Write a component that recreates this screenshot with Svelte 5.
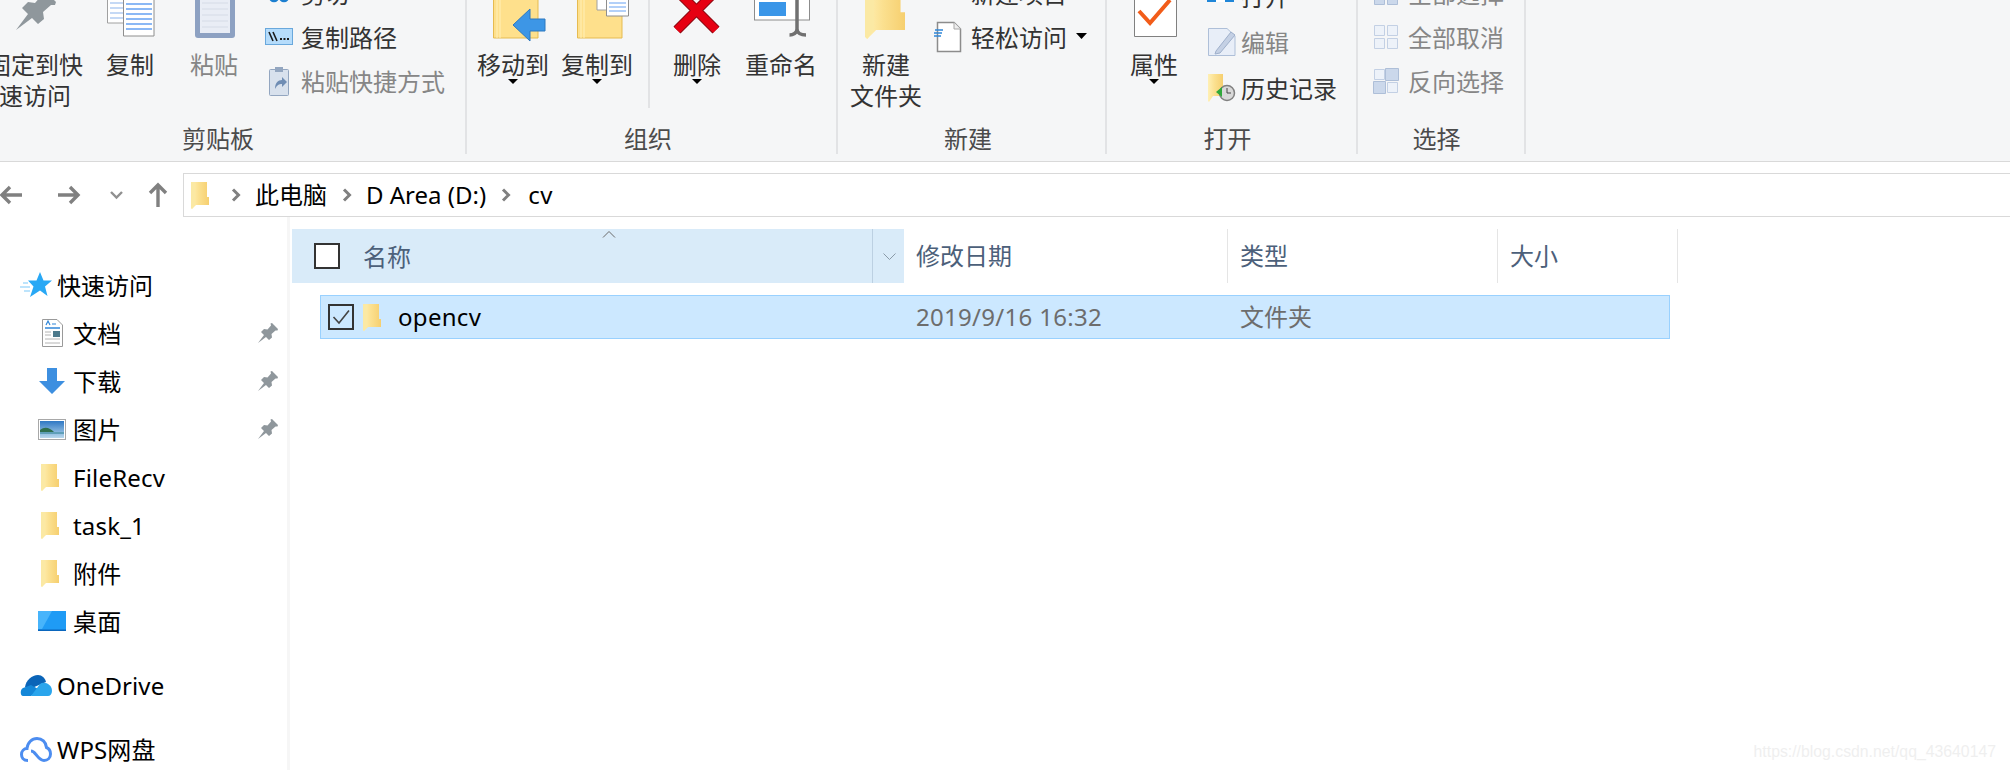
<script>
	const quick = [
		{ name: '文档', icon: 'doc', pin: true },
		{ name: '下载', icon: 'down', pin: true },
		{ name: '图片', icon: 'pic', pin: true },
		{ name: 'FileRecv', icon: 'folder' },
		{ name: 'task_1', icon: 'folder' },
		{ name: '附件', icon: 'folder' },
		{ name: '桌面', icon: 'desk' }
	];
</script>

{#snippet folder(w = 18, h = 27)}
	<svg class="fld" width={w} height={h} viewBox="0 0 18 27">
		<path d="M0 0H16V15H18V23H5L1 27L0 26Z" fill="url(#folderFill)" />
		<path d="M0 0H4V23L1 27L0 26Z" fill="#fbe9a4" />
	</svg>
{/snippet}

{#snippet pin(size = 20)}
	<svg width={size} height={size} viewBox="0 0 20 20">
		<path
			d="M0 20L6 12L3 9L6 6L9.5 6.5L13 2.5L12.5.5L14 0L20 6L19.5 7.5L17.5 7.5L13.5 11L14 14.5L11 17L8 14Z"
			fill="#8f979c"
		/>
	</svg>
{/snippet}

{#snippet chevron()}
	<svg class="chev" width="10" height="14" viewBox="0 0 10 14">
		<path d="M2 1.5L7.5 7L2 12.5" fill="none" stroke="#808080" stroke-width="3" />
	</svg>
{/snippet}

{#snippet caret()}
	<svg class="caret" width="10" height="5" viewBox="0 0 10 5"><path d="M0 0H10L5 5Z" fill="#000" /></svg>
{/snippet}

<svg class="defs" width="0" height="0" aria-hidden="true">
	<defs>
		<linearGradient id="folderFill" x1="0" x2="1" y1="0" y2="0">
			<stop offset="0" stop-color="#fff0b5" />
			<stop offset="0.45" stop-color="#fbe08f" />
			<stop offset="1" stop-color="#f6cf6f" />
		</linearGradient>
		<linearGradient id="skyFill" x1="0" x2="0" y1="0" y2="1">
			<stop offset="0" stop-color="#2f78c4" />
			<stop offset="1" stop-color="#b8d8ec" />
		</linearGradient>
	</defs>
</svg>

<div class="window">
	<section class="ribbon">
		<div class="group clipboard">
			<div class="tools">
				<div class="big w-pin">
					<div class="ico">
						<svg width="96" height="40" viewBox="0 0 96 40">
							<svg x="29" y="-10" width="40" height="40" viewBox="0 0 20 20">
								<path
									d="M0 20L6 12L3 9L6 6L9.5 6.5L13 2.5L12.5.5L14 0L20 6L19.5 7.5L17.5 7.5L13.5 11L14 14.5L11 17L8 14Z"
									fill="#8f979c"
								/>
							</svg>
						</svg>
					</div>
					<span>固定到快<br />速访问</span>
				</div>
				<div class="big w-copy">
					<div class="ico">
						<svg width="47" height="40" viewBox="0 0 47 40">
							<path d="M1.5-5H30V23H1.5Z" fill="#fff" stroke="#a0a0a0" />
							<path d="M4 3H28M4 8H28M4 13H28M4 18H28" stroke="#b3cdf2" stroke-width="1.5" />
							<path d="M17.5-5H48V36H17.5Z" fill="#fff" stroke="#8e8e8e" />
							<path d="M20 4H46M20 9H46M20 14H46M20 19H46M20 24H46M20 29H46" stroke="#66a1f2" stroke-width="1.5" />
						</svg>
					</div>
					<span>复制</span>
				</div>
				<div class="big w-paste muted">
					<div class="ico">
						<svg width="47" height="40" viewBox="0 0 47 40">
							<rect x="5" y="-10" width="40" height="48" rx="3" fill="#8da1c2" />
							<rect x="10" y="-8" width="30" height="41" fill="#e9edf5" />
							<path d="M12 3H38M12 9H38M12 15H38M12 21H38M12 27H38" stroke="#d5dbe6" />
						</svg>
					</div>
					<span>粘贴</span>
				</div>
				<div class="small-col cb-col">
					<div class="small">
						<svg class="s-ico" width="28" height="20" viewBox="0 0 28 20">
							<circle cx="9" cy="14" r="4" fill="none" stroke="#1c7fd0" stroke-width="2.5" />
							<circle cx="19" cy="14" r="4" fill="none" stroke="#1c7fd0" stroke-width="2.5" />
							<path d="M11 10L18 0M17 10L10 0" stroke="#4d6a85" stroke-width="2" />
						</svg>
						<span>剪切</span>
					</div>
					<div class="small">
						<svg class="s-ico" width="28" height="18" viewBox="0 0 28 18">
							<rect x=".5" y=".5" width="27" height="16" fill="#b5dcfb" stroke="#69a8dc" />
							<path d="M4 4L8 13M8 4L12 13" stroke="#1a1a1a" stroke-width="1.6" />
							<path d="M15 11H24" stroke="#1a1a1a" stroke-width="2" stroke-dasharray="2 1.5" />
						</svg>
						<span>复制路径</span>
					</div>
					<div class="small muted">
						<svg class="s-ico" width="28" height="29" viewBox="0 0 28 29">
							<rect x="4.5" y="2.5" width="19" height="26" rx="1" fill="#d8e1ed" stroke="#93a6c0" />
							<rect x="10" y="0" width="8" height="5" fill="#93a6c0" />
							<path d="M10 22C10 16 13 13 17 13V10L22 15L17 20V17C14 17 12 18 10 22Z" fill="#6f8db4" />
						</svg>
						<span>粘贴快捷方式</span>
					</div>
				</div>
			</div>
			<p class="label">剪贴板</p>
		</div>

		<div class="group organize">
			<div class="tools">
				<div class="big w-3">
					<div class="ico">
						<svg width="72" height="40" viewBox="0 0 72 40">
							<path d="M16.5-5H61V38H16.5Z" fill="#fee08c" stroke="#e6bb50" />
							<path d="M20 -5V38M23 -5V38" stroke="#fff0b8" />
							<path d="M36 25L53 9V19H68V31H53V41Z" fill="#3d96e6" stroke="#2c78c0" />
						</svg>
					</div>
					<span>移动到</span>
					{@render caret()}
				</div>
				<div class="big w-3">
					<div class="ico">
						<svg width="72" height="40" viewBox="0 0 72 40">
							<path d="M16.5-5H61V38H16.5Z" fill="#fee08c" stroke="#e6bb50" />
							<path d="M20 -5V38M23 -5V38" stroke="#fff0b8" />
							<path d="M36-5H62V10H36Z" fill="#fff" stroke="#a0a0a0" />
							<path d="M45.5-5H67.5V16H45.5Z" fill="#fff" stroke="#8e8e8e" />
							<path d="M48 3H65M48 7H65M48 11H65" stroke="#66a1f2" />
						</svg>
					</div>
					<span>复制到</span>
					{@render caret()}
				</div>
				<div class="rule"></div>
				<div class="big w-del">
					<div class="ico">
						<svg width="48" height="40" viewBox="0 0 48 40">
							<path d="M4-9L43 30M43-9L4 30" stroke="#8d0a12" stroke-width="10" />
							<path d="M4-9L43 30M43-9L4 30" stroke="#e60012" stroke-width="8" />
						</svg>
					</div>
					<span>删除</span>
					{@render caret()}
				</div>
				<div class="big w-3 ren">
					<div class="ico">
						<svg width="72" height="40" viewBox="0 0 72 40">
							<rect x="9.5" y="-5" width="55" height="25" fill="#fff" stroke="#8c8c8c" />
							<rect x="14" y="2" width="27" height="14" fill="#3a96e8" />
							<path d="M52-5V30M44.5 35C48 35 52 33 52 29C52 33 56 35 61 35" fill="none" stroke="#707070" stroke-width="3.5" />
						</svg>
					</div>
					<span>重命名</span>
				</div>
			</div>
			<p class="label">组织</p>
		</div>

		<div class="group create">
			<div class="tools">
				<div class="big w-3 newf">
					<div class="ico">
						<svg width="72" height="40" viewBox="0 0 72 40">
							<svg x="15" y="-22" width="40" height="62" viewBox="0 0 18 27">
								<path d="M0 1H16V15H18V23H5L1 27L0 26Z" fill="url(#folderFill)" />
								<path d="M0 1H4V23L1 27L0 26Z" fill="#fbe9a4" />
							</svg>
						</svg>
					</div>
					<span>新建<br />文件夹</span>
				</div>
				<div class="small-col new-col">
					<div class="small">
						<svg class="s-ico" width="37" height="20" viewBox="0 0 37 20">
							<path d="M10.5-8H29.5V5H10.5Z" fill="#fff" stroke="#9a9a9a" />
							<path d="M13 1H27M13 4H27" stroke="#66a1f2" />
						</svg>
						<span>新建项目</span>
					</div>
					<div class="small">
						<svg class="s-ico" width="37" height="30" viewBox="0 0 37 30">
							<path d="M3.5.5H20L26.5 7V29.5H3.5Z" fill="#fff" stroke="#8c8c8c" stroke-width="1.5" />
							<path d="M20 .5V7H26.5" fill="#eee" stroke="#a8a8a8" />
							<path d="M1 8H9M0 11H8M0 14H7" stroke="#2f86d8" stroke-width="1.5" />
						</svg>
						<span>轻松访问</span>
						<svg class="tri" width="11" height="6" viewBox="0 0 11 6"><path d="M0 0H11L5.5 6Z" fill="#000" /></svg>
					</div>
				</div>
			</div>
			<p class="label">新建</p>
		</div>

		<div class="group open">
			<div class="tools">
				<div class="big w-prop">
					<div class="ico">
						<svg width="48" height="40" viewBox="0 0 48 40">
							<path d="M4.5-5H46.5V36.5H4.5Z" fill="#fff" stroke="#808080" />
							<path d="M9 11L20 23L40 0" fill="none" stroke="#f25c19" stroke-width="4" />
						</svg>
					</div>
					<span>属性</span>
					{@render caret()}
				</div>
				<div class="small-col open-col">
					<div class="small">
						<svg class="s-ico" width="36" height="16" viewBox="0 0 36 16">
							<rect x="2" y="-4" width="27" height="10" fill="#f2b632" />
							<rect x="2" y="3" width="27" height="11" fill="#1f86d8" />
							<rect x="11" y="8" width="9" height="6" fill="#fff" />
						</svg>
						<span>打开</span>
					</div>
					<div class="small muted">
						<svg class="s-ico" width="36" height="28" viewBox="0 0 36 28">
							<path d="M3.5.5H22L30 8V27.5H3.5Z" fill="#e8eef8" stroke="#aebfd8" />
							<path d="M11 23L26 4L30 7L15 25L10 26Z" fill="#c4d0e4" stroke="#9fb0cb" />
						</svg>
						<span>编辑</span>
					</div>
					<div class="small">
						<svg class="s-ico" width="36" height="28" viewBox="0 0 36 28">
							<path d="M3 0H18V22H8L4 28L3 27Z" fill="url(#folderFill)" />
							<circle cx="22" cy="19" r="7.5" fill="#d8d8d8" stroke="#808080" stroke-width="1.5" />
							<path d="M22 14V19H26" fill="none" stroke="#444" />
							<path d="M11 18L17 13V23Z" fill="#2fa83a" />
						</svg>
						<span>历史记录</span>
					</div>
				</div>
			</div>
			<p class="label">打开</p>
		</div>

		<div class="group select">
			<div class="tools">
				<div class="small-col sel-col">
					<div class="small muted">
						<svg class="s-ico" width="35" height="26" viewBox="0 0 35 26">
							<path d="M1.5 1.5H11.5V11.5H1.5ZM14.5 1.5H24.5V11.5H14.5ZM1.5 14.5H11.5V24.5H1.5ZM14.5 14.5H24.5V24.5H14.5Z" fill="#cbd8eb" stroke="#aebfd8" />
						</svg>
						<span>全部选择</span>
					</div>
					<div class="small muted">
						<svg class="s-ico" width="35" height="26" viewBox="0 0 35 26">
							<path d="M1.5 1.5H11.5V11.5H1.5ZM14.5 1.5H24.5V11.5H14.5ZM1.5 14.5H11.5V24.5H1.5ZM14.5 14.5H24.5V24.5H14.5Z" fill="#edf2f9" stroke="#c3d0e4" />
						</svg>
						<span>全部取消</span>
					</div>
					<div class="small muted">
						<svg class="s-ico" width="35" height="26" viewBox="0 0 35 26">
							<path d="M1.5 1.5H11.5V11.5H1.5ZM14.5 14.5H24.5V24.5H14.5Z" fill="#edf2f9" stroke="#c3d0e4" />
							<path d="M12.5.5H25.5V12.5H12.5ZM.5 13.5H12.5V25.5H.5Z" fill="#cbd8eb" stroke="#aebfd8" />
						</svg>
						<span>反向选择</span>
					</div>
				</div>
			</div>
			<p class="label">选择</p>
		</div>
	</section>

	<nav class="navbar">
		<div class="nav-btns">
			<svg class="back" width="22" height="20" viewBox="0 0 22 20">
				<path d="M10 2L2 10L10 18M2 10H22" fill="none" stroke="#808080" stroke-width="3.4" />
			</svg>
			<svg class="fwd" width="22" height="20" viewBox="0 0 22 20">
				<path d="M12 2L20 10L12 18M20 10H0" fill="none" stroke="#808080" stroke-width="3.4" />
			</svg>
			<svg class="recent" width="13" height="8" viewBox="0 0 13 8">
				<path d="M1 1L6.5 6.5L12 1" fill="none" stroke="#909090" stroke-width="2.4" />
			</svg>
			<svg class="up" width="18" height="23" viewBox="0 0 18 23">
				<path d="M1 9L9 1L17 9M9 1V23" fill="none" stroke="#808080" stroke-width="3.4" />
			</svg>
		</div>
		<div class="address">
			<span class="addr-folder">{@render folder()}</span>
			{@render chevron()}
			<span class="crumb">此电脑</span>
			{@render chevron()}
			<span class="crumb">D Area (D:)</span>
			{@render chevron()}
			<span class="crumb last">cv</span>
		</div>
	</nav>

	<main class="body">
		<aside class="sidebar">
			<div class="row top">
				<svg class="top-ico" width="32" height="26" viewBox="0 0 32 26">
					<path d="M20 0L23.5 8.5H32L25 14.5L27.5 24L20 18.5L10 25L13.5 14.5L8 8.5H16.5Z" fill="#28a8f5" />
					<path d="M0 15H10M3 11H8M4 19H10" stroke="#a8dcfb" stroke-width="1.5" />
				</svg>
				<span>快速访问</span>
			</div>
			{#each quick as item}
				<div class="row sub">
					<span class="sub-ico">
						{#if item.icon === 'folder'}
							{@render folder()}
						{:else if item.icon === 'doc'}
							<svg width="21" height="28" viewBox="0 0 21 28">
								<path d="M.5.5H15L20.5 6V27.5H.5Z" fill="#fff" stroke="#9a9a9a" />
								<path d="M3 9H18" stroke="#2f86d8" stroke-width="1.5" />
								<path d="M4 6L6 2L8 6M10 5H14" fill="none" stroke="#2f86d8" stroke-width="1.2" />
								<rect x="11" y="12" width="7" height="6" fill="#4d7a8c" />
								<path d="M3 13H9M3 16H9M3 20H18M3 24H18" stroke="#b4b4b4" />
							</svg>
						{:else if item.icon === 'down'}
							<svg width="26" height="26" viewBox="0 0 26 26">
								<path d="M8 0H18V13H26L13 26L0 13H8Z" fill="#3d8fe0" />
							</svg>
						{:else if item.icon === 'pic'}
							<svg width="28" height="21" viewBox="0 0 28 21">
								<rect x=".5" y=".5" width="27" height="20" fill="#fff" stroke="#a8a8a8" />
								<rect x="2" y="2" width="24" height="17" fill="url(#skyFill)" />
								<path d="M2 11C7 7 12 9 16 13H2Z" fill="#2f6f4f" />
								<path d="M2 13H26V15H2Z" fill="#5f9fb8" />
							</svg>
						{:else}
							<svg width="28" height="20" viewBox="0 0 28 20">
								<rect width="28" height="20" fill="#1f9bf5" />
								<path d="M0 0H14L4 18H0Z" fill="#47b4fb" />
								<rect y="18.5" width="28" height="1.5" fill="#0a66bd" />
							</svg>
						{/if}
					</span>
					<span class="sub-name">{item.name}</span>
					{#if item.pin}
						<span class="pin">{@render pin()}</span>
					{/if}
				</div>
			{/each}
			<div class="row top spaced">
				<svg class="top-ico" width="32" height="21" viewBox="0 0 32 21">
					<path d="M5 12C6 5 12 0 18 0C22 0 25 3 26 7L12 13Z" fill="#0a64b8" />
					<path d="M3 21C0 21 0 14 3 13L11 10L20 15L11 21Z" fill="#1487d8" />
					<path d="M11 21L20 9C24 6 32 9 32 16C32 19 30 21 28 21Z" fill="#2aa5ec" />
				</svg>
				<span class="wide">OneDrive</span>
			</div>
			<div class="row top spaced">
				<svg class="top-ico" width="32" height="25" viewBox="0 0 32 25">
					<path
						d="M8 23.5C3 23.5 1.5 20 1.5 17.5C1.5 14 4 11.5 7 11.5C7.5 5.5 12 1.5 17 1.5C22 1.5 26 5 26.5 10.5C29 11.5 30.5 14 30.5 17C30.5 21 27.5 23.5 24 23.5C20 23.5 18 20 15.5 17C14 15 12.5 14 11 14"
						fill="none"
						stroke="#4c8df0"
						stroke-width="3"
					/>
				</svg>
				<span class="wide">WPS网盘</span>
			</div>
		</aside>

		<section class="files">
			<header class="head">
				<div class="col-name">
					<span class="box"></span>
					<span class="head-txt">名称</span>
					<svg class="sort" width="14" height="7" viewBox="0 0 14 7">
						<path d="M1 6.5L7 .5L13 6.5" fill="none" stroke="#6a6a6a" />
					</svg>
					<span class="split">
						<svg width="13" height="7" viewBox="0 0 13 7">
							<path d="M.5 .5L6.5 6.5L12.5 .5" fill="none" stroke="#8a9aa8" />
						</svg>
					</span>
				</div>
				<div class="col col-date">修改日期</div>
				<div class="col col-type">类型</div>
				<div class="col col-size">大小</div>
				<div class="end"></div>
			</header>
			<div class="item">
				<div class="item-name">
					<span class="box checked">
						<svg width="18" height="16" viewBox="0 0 18 16">
							<path d="M1.5 8L7 14L17 1.5" fill="none" stroke="#444" stroke-width="1.6" />
						</svg>
					</span>
					<span class="item-folder">{@render folder()}</span>
					<span class="fname">opencv</span>
				</div>
				<div class="item-date">2019/9/16 16:32</div>
				<div class="item-type">文件夹</div>
			</div>
		</section>
	</main>

	<div class="mark">https://blog.csdn.net/qq_43640147</div>
</div>

<style>
	:global(body) {
		margin: 0;
		background: #fff;
		overflow: hidden;
	}

	.defs {
		position: absolute;
	}

	svg {
		overflow: visible;
		flex-shrink: 0;
		display: block;
	}

	.window {
		position: relative;
		width: 2010px;
		height: 770px;
		overflow: hidden;
		font-family: 'Noto Sans', 'Noto Sans CJK SC', sans-serif;
		font-size: 24px;
		line-height: 31px;
		color: #000;
	}

	.ribbon {
		display: flex;
		height: 161px;
		background: #f5f6f7;
		border-bottom: 1px solid #d9d9d9;
		overflow: hidden;
		color: #333;
	}

	.group {
		display: flex;
		flex-direction: column;
		flex-shrink: 0;
		height: 154px;
		border-right: 2px solid #e2e3e5;
	}

	.clipboard {
		width: 478px;
		margin-left: -13px;
	}

	.clipboard .label {
		padding-right: 16px;
	}

	.organize {
		width: 369px;
	}

	.organize .label,
	.create .label {
		padding-right: 7px;
	}

	.create {
		width: 267px;
	}

	.open {
		width: 249px;
	}

	.open .label {
		padding-right: 8px;
	}

	.select {
		width: 166px;
	}

	.select .label {
		padding-right: 9px;
	}

	.tools {
		display: flex;
		height: 123px;
	}

	.label {
		margin: 0;
		line-height: 31px;
		text-align: center;
		color: #4b4b4b;
	}

	.big {
		position: relative;
		flex-shrink: 0;
		text-align: center;
	}

	.ico {
		height: 40px;
		margin-bottom: 9px;
	}

	.caret {
		position: absolute;
		left: 50%;
		top: 79px;
		margin-left: -5px;
	}

	.muted {
		color: #868686;
	}

	.w-pin {
		width: 96px;
	}

	.w-copy {
		width: 48px;
		margin-left: 23px;
	}

	.w-paste {
		width: 48px;
		margin-left: 36px;
	}

	.w-3 {
		width: 72px;
	}

	.organize .w-3:first-child {
		margin-left: 10px;
	}

	.organize .w-3:nth-child(2) {
		margin-left: 12px;
	}

	.rule {
		flex-shrink: 0;
		width: 2px;
		height: 108px;
		margin-left: 15px;
		background: #e2e3e5;
	}

	.w-del {
		width: 48px;
		margin-left: 23px;
	}

	.ren {
		margin-left: 24px;
	}

	.newf {
		margin-left: 12px;
	}

	.w-prop {
		width: 48px;
		margin-left: 23px;
	}

	.small-col {
		display: flex;
		flex-direction: column;
		margin-top: -29px;
	}

	.small {
		display: flex;
		align-items: center;
		height: 44px;
		white-space: nowrap;
	}

	.s-ico {
		margin-right: 8px;
	}

	.cb-col {
		margin-left: 27px;
	}

	.new-col {
		margin-left: 12px;
	}

	.new-col .s-ico {
		margin-right: 0;
	}

	.tri {
		margin-left: 9px;
		margin-top: -2px;
	}

	.open-col {
		margin-left: 27px;
		margin-top: -27px;
	}

	.open-col .s-ico {
		margin-right: 0;
	}

	.open-col .small {
		height: 46px;
	}

	.sel-col {
		margin-left: 15px;
	}

	.sel-col .s-ico {
		margin-right: 0;
	}

	.navbar {
		display: flex;
		align-items: center;
		height: 55px;
		box-sizing: border-box;
		padding-top: 11px;
	}

	.nav-btns {
		display: flex;
		align-items: center;
		width: 183px;
		flex-shrink: 0;
	}

	.fwd {
		margin-left: 36px;
	}

	.recent {
		margin-left: 30px;
	}

	.up {
		margin-left: 26px;
	}

	.address {
		display: flex;
		align-items: center;
		flex: 1;
		height: 44px;
		box-sizing: border-box;
		padding-left: 7px;
		border: 1px solid #d9d9d9;
		border-right: none;
	}

	.crumb {
		padding-bottom: 2px;
	}

	.last {
		margin-left: 3px;
		letter-spacing: 0.5px;
	}

	.addr-folder {
		margin-right: 22px;
	}

	.chev {
		margin-right: 14px;
		margin-left: 15px;
	}

	.addr-folder + .chev {
		margin-left: 0;
	}

	.body {
		display: flex;
		height: 553px;
	}

	.sidebar {
		width: 290px;
		flex-shrink: 0;
		box-sizing: border-box;
		padding-top: 44px;
		border-right: 3px solid #f6f6f6;
	}

	.row {
		display: flex;
		align-items: center;
		height: 48px;
		position: relative;
	}

	.spaced {
		margin-top: 16px;
	}

	.top-ico {
		margin-left: 20px;
		margin-right: 5px;
	}

	.sub-ico {
		display: flex;
		justify-content: center;
		width: 28px;
		margin-left: 38px;
		margin-right: 7px;
	}

	.sub-ico .fld {
		margin-left: -4px;
	}

	.sub-name {
		flex: 1;
		letter-spacing: 0.2px;
	}

	.wide {
		letter-spacing: 0.1px;
	}

	.pin {
		margin-right: 9px;
	}

	.files {
		flex: 1;
		padding-top: 12px;
		padding-left: 2px;
	}

	.head {
		display: flex;
		height: 54px;
		color: #4c607a;
	}

	.col-name {
		position: relative;
		display: flex;
		align-items: center;
		width: 612px;
		background: #d9ebf9;
		flex-shrink: 0;
	}

	.box {
		display: flex;
		align-items: center;
		justify-content: center;
		box-sizing: border-box;
		width: 26px;
		height: 26px;
		border: 2px solid #333;
		background: #fff;
		flex-shrink: 0;
	}

	.col-name .box {
		margin-left: 22px;
	}

	.head-txt {
		margin-left: 23px;
	}

	.sort {
		position: absolute;
		left: 310px;
		top: 2px;
	}

	.split {
		position: absolute;
		left: 580px;
		top: 0;
		bottom: 0;
		width: 32px;
		display: flex;
		align-items: center;
		justify-content: center;
		border-left: 1px solid #bcd0e2;
	}

	.col {
		display: flex;
		align-items: center;
		box-sizing: border-box;
		padding-left: 12px;
		flex-shrink: 0;
		padding-bottom: 1px;
	}

	.col-date {
		width: 323px;
	}

	.col-type {
		width: 270px;
		border-left: 1px solid #e5e5e5;
	}

	.col-size {
		width: 180px;
		border-left: 1px solid #e5e5e5;
	}

	.end {
		width: 1px;
		background: #e5e5e5;
	}

	.item {
		display: flex;
		align-items: center;
		width: 1350px;
		height: 44px;
		box-sizing: border-box;
		margin: 12px 0 0 28px;
		background: #cce8ff;
		border: 1px solid #99d1ff;
		color: #6d6d6d;
	}

	.item-name {
		display: flex;
		align-items: center;
		width: 595px;
		flex-shrink: 0;
		color: #000;
	}

	.box.checked {
		margin-left: 7px;
		background: transparent;
	}

	.item-folder {
		margin-left: 9px;
	}

	.fname {
		margin-left: 17px;
		letter-spacing: 0.3px;
		padding-bottom: 2px;
	}

	.item-date {
		width: 324px;
		flex-shrink: 0;
		letter-spacing: 0.3px;
		padding-bottom: 2px;
	}

	.item-type {
		padding-bottom: 2px;
	}

	.mark {
		position: absolute;
		right: 14px;
		top: 742px;
		font-family: 'Liberation Sans', sans-serif;
		font-size: 15.8px;
		line-height: 20px;
		color: #efefef;
	}
</style>
